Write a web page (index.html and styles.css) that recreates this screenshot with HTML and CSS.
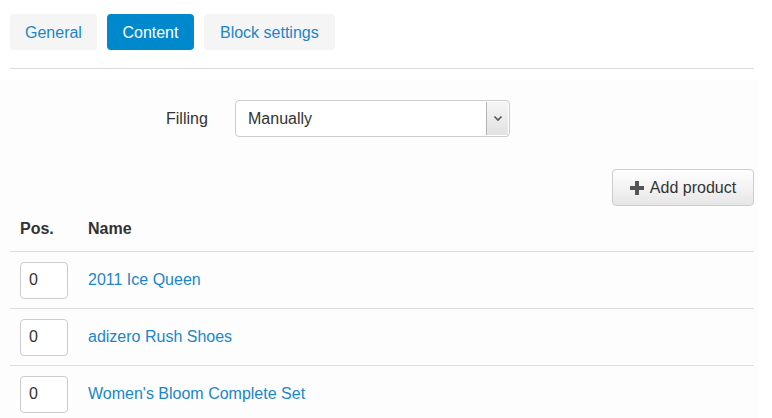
FILE: index.html
```html
<!DOCTYPE html>
<html>
<head>
<meta charset="utf-8">
<link rel="stylesheet" href="styles.css">
</head>
<body>
<div class="page">
  <nav class="tabs">
    <a class="tab">General</a>
    <a class="tab active">Content</a>
    <a class="tab">Block settings</a>
  </nav>
  <hr class="sep">
  <div class="panel">
    <div class="form-row">
      <label class="label">Filling</label>
      <div class="select">
        <span class="select-value">Manually</span>
        <span class="select-arrow">
          <svg width="10" height="7" viewBox="0 0 10 7"><path d="M1.5 1.5 L5 5 L8.5 1.5" fill="none" stroke="#555" stroke-width="1.6"/></svg>
        </span>
      </div>
    </div>
    <div class="actions">
      <button class="btn">
        <svg width="14" height="14" viewBox="0 0 14 14"><path d="M5 0h4v5h5v4H9v5H5V9H0V5h5z" fill="#555"/></svg>
        Add product
      </button>
    </div>
    <table class="table">
      <thead>
        <tr><th class="c-pos">Pos.</th><th>Name</th></tr>
      </thead>
      <tbody>
        <tr><td class="c-pos"><input class="pos" value="0"></td><td><a class="link">2011 Ice Queen</a></td></tr>
        <tr><td class="c-pos"><input class="pos" value="0"></td><td><a class="link">adizero Rush Shoes</a></td></tr>
        <tr><td class="c-pos"><input class="pos" value="0"></td><td><a class="link">Women's Bloom Complete Set</a></td></tr>
      </tbody>
    </table>
  </div>
</div>
</body>
</html>
```
FILE: styles.css
```css
html, body { margin: 0; padding: 0; background: #fff; }
body { font-family: "Liberation Sans", Arial, sans-serif; font-size: 16px; color: #333; }
.page { width: 772px; height: 418px; overflow: hidden; }
.tabs { display: flex; gap: 10px; padding: 14px 10px 0; }
.tab { display: block; height: 36px; line-height: 37px; padding: 0 15px; border-radius: 4px; background: #f5f5f5; color: #1b86c8; }
.tab.active { background: #0088cc; color: #fff; padding: 0 15.5px; }
.tab:last-child { padding: 0 16px; }
.sep { margin: 18px 18px 0 10px; border: 0; border-top: 1px solid #dcdcdc; height: 0; }
.panel { margin: 11px 14px 0 0; background: #fdfdfd; padding-top: 20px; }
.form-row { display: flex; align-items: center; padding-left: 166px; }
.label { width: 69px; color: #333; }
.select { width: 273px; height: 35px; border: 1px solid #ccc; border-radius: 4px; background: #fff; display: flex; align-items: center; position: relative; }
.select-value { flex: 1; padding-left: 12px; color: #333; }
.select-arrow { width: 21px; height: 33px; margin-right: 1px; background: linear-gradient(#f5f5f5, #e2e2e2); border-left: 1px solid #b5b5b5; display: flex; align-items: center; justify-content: center; }
.actions { display: flex; justify-content: flex-end; padding: 32px 4px 0 0; }
.btn { height: 37px; width: 142px; border: 1px solid #ccc; border-radius: 4px; background: linear-gradient(#fff, #e6e6e6); font: 16px "Liberation Sans", Arial, sans-serif; color: #333; display: flex; align-items: center; justify-content: center; gap: 6px; padding: 0; }
.table { border-collapse: collapse; width: 744px; margin-left: 10px; margin-top: 1px; }
.table th { text-align: left; font-weight: bold; height: 44px; padding: 0; border-bottom: 1px solid #ddd; }
.table td { height: 56px; padding: 0; border-bottom: 1px solid #ddd; }
.c-pos { width: 68px; padding-left: 10px !important; }
.pos { box-sizing: border-box; width: 48px; height: 37px; border: 1px solid #ccc; border-radius: 4px; padding: 0 0 0 8px; font: 16px "Liberation Sans", Arial, sans-serif; color: #333; background: #fff; display: block; }
.link { color: #1b86c8; }
```
